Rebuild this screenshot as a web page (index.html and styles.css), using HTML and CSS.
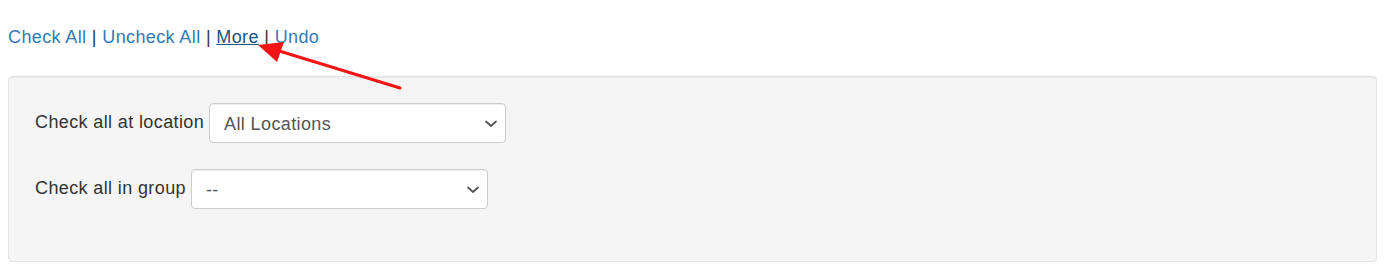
FILE: index.html
```html
<!DOCTYPE html>
<html>
<head>
<meta charset="utf-8">
<link rel="stylesheet" href="styles.css">
</head>
<body>
<div class="links">
  <a href="#" class="link">Check All</a> | <a href="#" class="link">Uncheck All</a> | <a href="#" class="link link-active">More</a> | <a href="#" class="link">Undo</a>
</div>
<div class="well">
  <div class="row">
    <label class="lbl">Check all at location</label>
    <div class="sel-wrap">
      <select class="sel"><option>All Locations</option></select>
      <svg class="chev" width="12" height="8" viewBox="0 0 12 8" xmlns="http://www.w3.org/2000/svg"><path d="M1 1.5 L6 6 L11 1.5" fill="none" stroke="#555" stroke-width="1.8" stroke-linecap="round" stroke-linejoin="round"/></svg>
    </div>
  </div>
  <div class="row">
    <label class="lbl">Check all in group</label>
    <div class="sel-wrap">
      <select class="sel"><option>--</option></select>
      <svg class="chev" width="12" height="8" viewBox="0 0 12 8" xmlns="http://www.w3.org/2000/svg"><path d="M1 1.5 L6 6 L11 1.5" fill="none" stroke="#555" stroke-width="1.8" stroke-linecap="round" stroke-linejoin="round"/></svg>
    </div>
  </div>
</div>
<svg class="annot" width="1394" height="276" viewBox="0 0 1394 276" xmlns="http://www.w3.org/2000/svg">
  <line x1="400" y1="88" x2="276" y2="50" stroke="#f21515" stroke-width="3" stroke-linecap="round"/>
  <polygon points="258,45 284,42 277,62" fill="#f21515"/>
</svg>
</body>
</html>
```
FILE: styles.css
```css
html, body {
  background: #fff;
}
body {
  margin: 8px;
  font-family: "Liberation Sans", Arial, sans-serif;
  font-size: 18px;
  letter-spacing: 0.38px;
  line-height: 1.42857;
  color: #333;
  position: relative;
}
.links {
  margin: 17px 0 25px 0;
  height: 26px;
}
.link {
  color: #337ab7;
  text-decoration: none;
}
.link-active {
  color: #23527c;
  text-decoration: underline;
}
.well {
  margin-right: 9px;
  height: 186px;
  box-sizing: border-box;
  background: #f5f5f5;
  border: 1px solid #e3e3e3;
  border-radius: 4px;
  box-shadow: inset 0 1px 1px rgba(0,0,0,.05);
  padding: 26px 26px 0 26px;
  display: flex;
  flex-direction: column;
  gap: 26px;
}
.row {
  display: flex;
  align-items: center;
  gap: 5px;
  height: 40px;
}
.lbl {
  color: #333;
}
.sel-wrap {
  position: relative;
  width: 297px;
  height: 40px;
}
.sel {
  -webkit-appearance: none;
  appearance: none;
  width: 100%;
  height: 40px;
  box-sizing: border-box;
  font-family: "Liberation Sans", Arial, sans-serif;
  font-size: 18px;
  letter-spacing: 0.38px;
  color: #555;
  background: #fff;
  border: 1px solid #ccc;
  border-radius: 4px;
  padding: 7px 30px 5px 14px;
  box-shadow: inset 0 1px 1px rgba(0,0,0,.075);
}
.chev {
  position: absolute;
  right: 9px;
  top: 17px;
  pointer-events: none;
}
.annot {
  position: absolute;
  left: -8px;
  top: -8px;
  pointer-events: none;
}
```
